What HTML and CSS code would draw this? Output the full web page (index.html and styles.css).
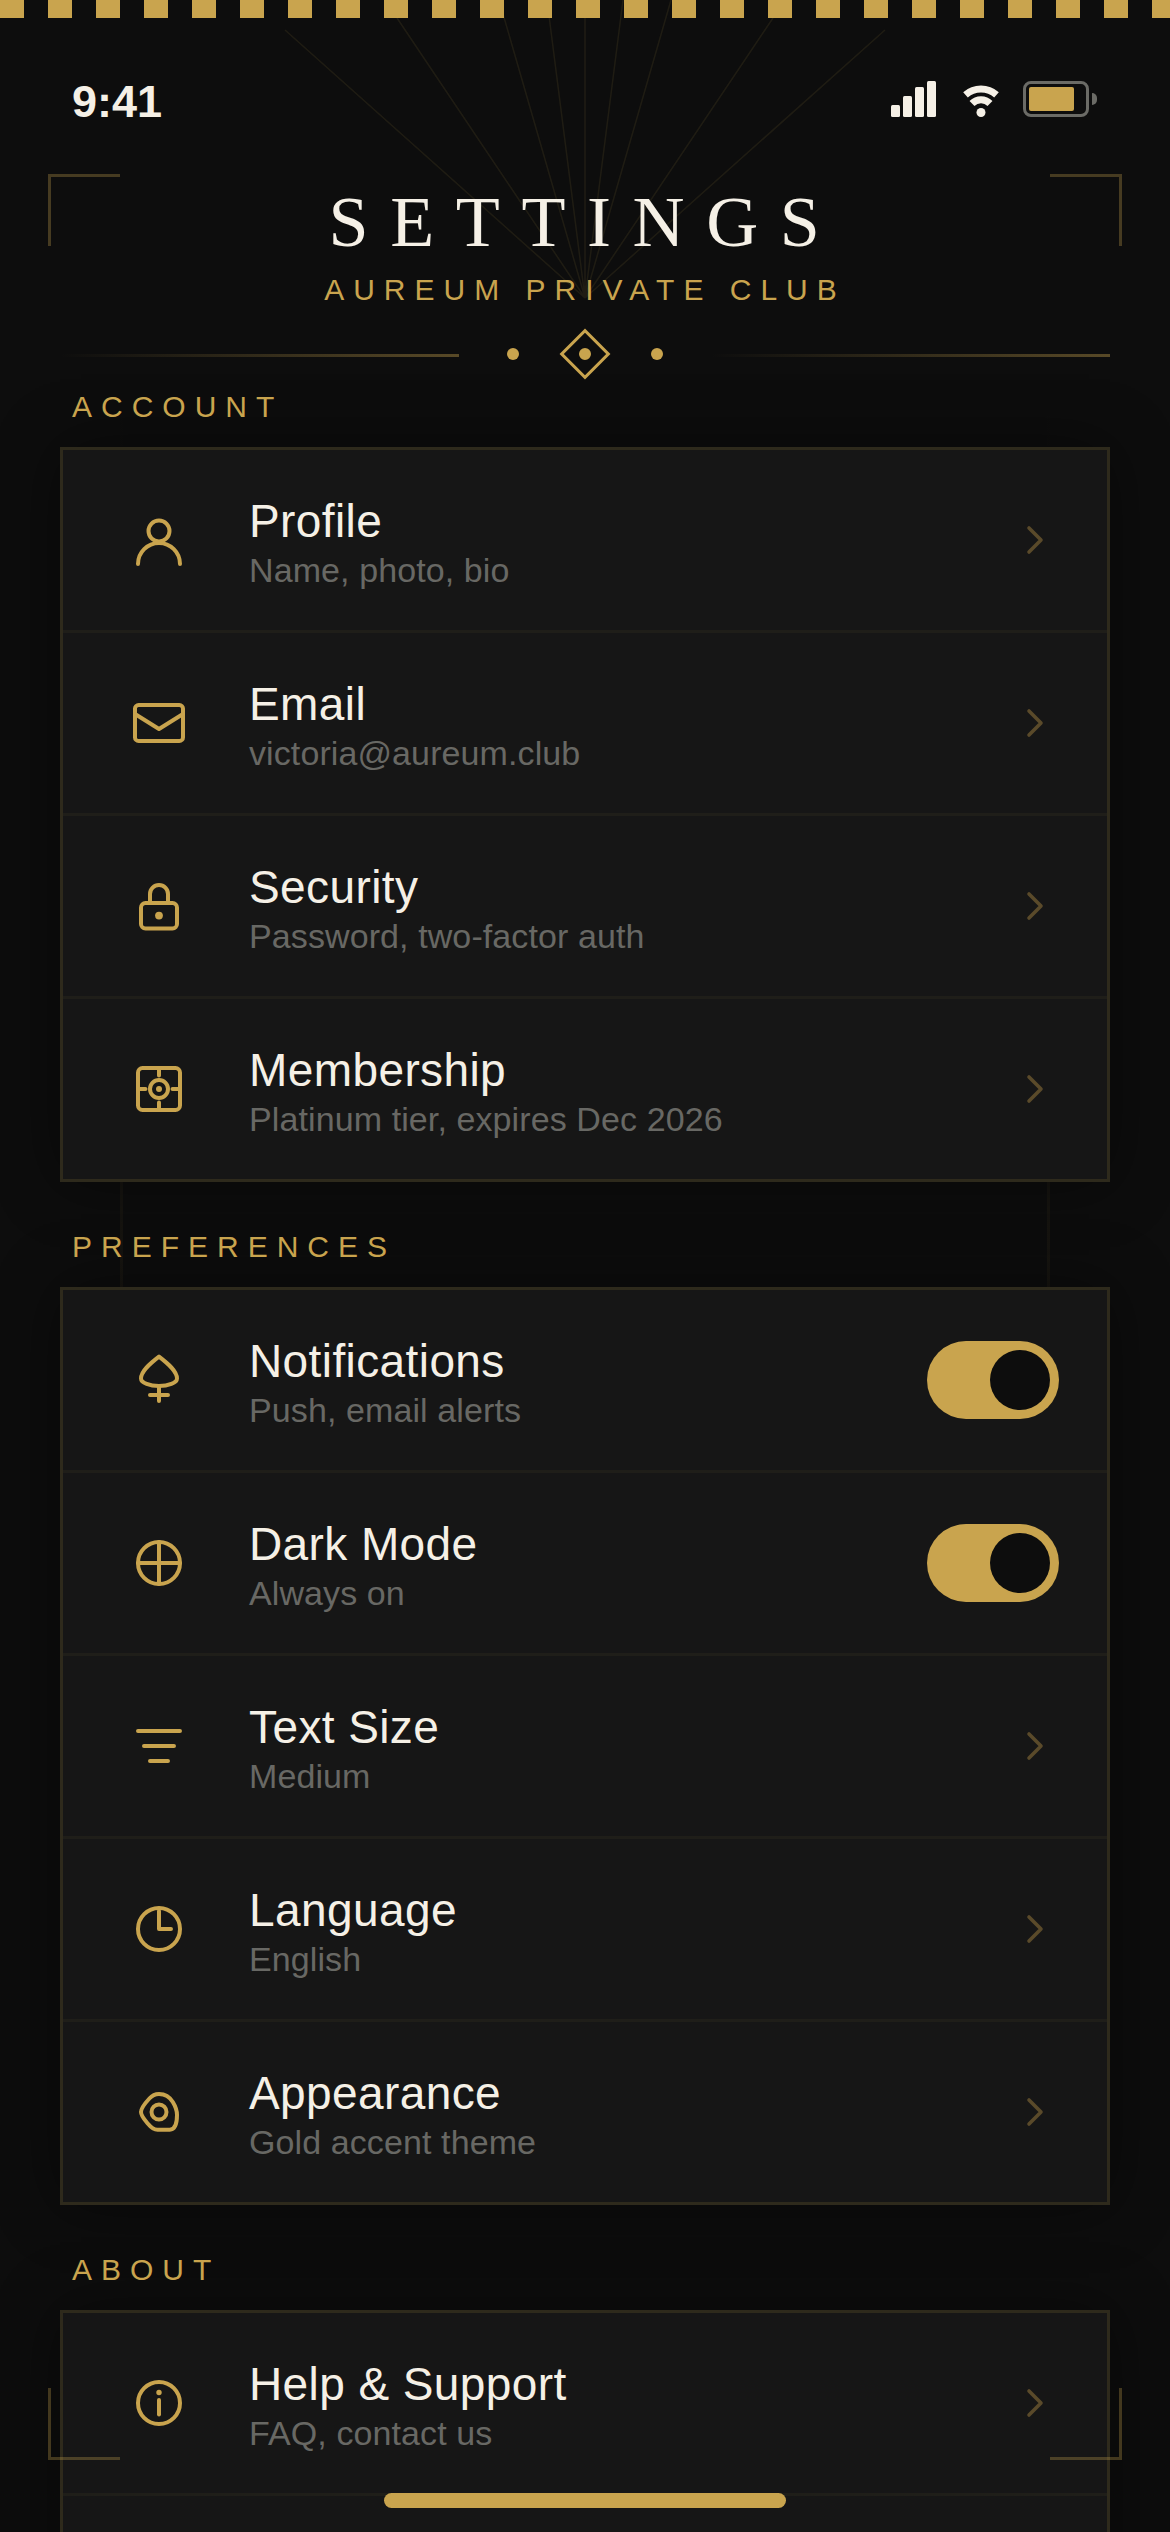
FILE: index.html
```html
<!DOCTYPE html>
<html lang="en">
<head>
  <meta charset="UTF-8">
  <title>Settings</title>
  <link rel="stylesheet" href="styles.css">
</head>
<body>
  <div class="screen">
    <div class="pillar pillar-left"></div>
    <div class="pillar pillar-right"></div>

    <svg class="rays" width="1170" height="300" viewBox="0 0 1170 300">
      <path d="M585 298L285 30M585 298L397 18M585 298L499 0M585 298L547 0M585 298V0M585 298L623 0M585 298L671 0M585 298L773 18M585 298L885 30"/>
    </svg>

    <div class="deco-band"></div>

    <div class="corner corner-tl"></div>
    <div class="corner corner-tr"></div>
    <div class="corner corner-bl"></div>
    <div class="corner corner-br"></div>

    <div class="status-bar">
      <span class="time">9:41</span>
      <div class="status-icons">
        <div class="signal">
          <i class="bar-1"></i>
          <i class="bar-2"></i>
          <i class="bar-3"></i>
          <i class="bar-4"></i>
        </div>
        <svg class="wifi" width="36" height="32" viewBox="0 0 36 32">
          <path d="M2.5 9.8A23.5 23.5 0 0 1 33.5 9.8"/>
          <path d="M9 18.5A12.7 12.7 0 0 1 27 18.5"/>
          <circle cx="18" cy="27.5" r="4.5"/>
        </svg>
        <div class="battery">
          <div class="battery-body"><div class="battery-level"></div></div>
          <div class="battery-nub"></div>
        </div>
      </div>
    </div>

    <header class="header">
      <h1>SETTINGS</h1>
      <p class="club">AUREUM PRIVATE CLUB</p>
      <div class="ornament">
        <div class="orn-line"></div>
        <div class="orn-center">
          <span class="orn-dot"></span>
          <span class="orn-diamond"><span class="orn-dot"></span></span>
          <span class="orn-dot"></span>
        </div>
        <div class="orn-line"></div>
      </div>
    </header>

    <h2 class="section-label section-first">ACCOUNT</h2>
    <section class="card">
      <div class="row">
        <svg class="icon" viewBox="0 0 24 24"><circle cx="12" cy="9" r="3.5"/><path d="M5 20a7 7 0 0 1 14 0"/></svg>
        <div class="row-text"><div class="row-title">Profile</div><div class="row-sub">Name, photo, bio</div></div>
        <svg class="chevron" viewBox="0 0 24 24"><path d="M9 6l6 6-6 6"/></svg>
      </div>
      <div class="row">
        <svg class="icon" viewBox="0 0 24 24"><rect x="4" y="6" width="16" height="12" rx="1.2"/><path d="M4 9l8 5 8-5"/></svg>
        <div class="row-text"><div class="row-title">Email</div><div class="row-sub">victoria@aureum.club</div></div>
        <svg class="chevron" viewBox="0 0 24 24"><path d="M9 6l6 6-6 6"/></svg>
      </div>
      <div class="row">
        <svg class="icon" viewBox="0 0 24 24"><rect x="6" y="11" width="12" height="8.5" rx="1.5"/><path d="M9 11V8a3 3 0 0 1 6 0v3"/><circle class="solid" cx="12" cy="15.2" r="1.3"/></svg>
        <div class="row-text"><div class="row-title">Security</div><div class="row-sub">Password, two-factor auth</div></div>
        <svg class="chevron" viewBox="0 0 24 24"><path d="M9 6l6 6-6 6"/></svg>
      </div>
      <div class="row">
        <svg class="icon" viewBox="0 0 24 24"><rect x="5" y="5" width="14" height="14" rx="1.5"/><circle cx="12" cy="12" r="3"/><circle class="solid" cx="12" cy="12" r="1"/><path d="M12 5v2.5M12 16.5V19M5 12h2.5M16.5 12H19"/></svg>
        <div class="row-text"><div class="row-title">Membership</div><div class="row-sub">Platinum tier, expires Dec 2026</div></div>
        <svg class="chevron" viewBox="0 0 24 24"><path d="M9 6l6 6-6 6"/></svg>
      </div>
    </section>

    <h2 class="section-label">PREFERENCES</h2>
    <section class="card">
      <div class="row">
        <svg class="icon" viewBox="0 0 24 24"><path d="M12 4.2C9 6.5 6 9 6 11.5 6 13 9 14 12 14s6-1 6-2.5C18 9 15 6.5 12 4.2z"/><path d="M12 14v5M9 17h6"/></svg>
        <div class="row-text"><div class="row-title">Notifications</div><div class="row-sub">Push, email alerts</div></div>
        <div class="toggle"><div class="knob"></div></div>
      </div>
      <div class="row">
        <svg class="icon" viewBox="0 0 24 24"><circle cx="12" cy="12" r="7"/><path d="M12 5v14M5 12h14"/></svg>
        <div class="row-text"><div class="row-title">Dark Mode</div><div class="row-sub">Always on</div></div>
        <div class="toggle"><div class="knob"></div></div>
      </div>
      <div class="row">
        <svg class="icon" viewBox="0 0 24 24"><path d="M5 7h14M7 12h10M9 17h6"/></svg>
        <div class="row-text"><div class="row-title">Text Size</div><div class="row-sub">Medium</div></div>
        <svg class="chevron" viewBox="0 0 24 24"><path d="M9 6l6 6-6 6"/></svg>
      </div>
      <div class="row">
        <svg class="icon" viewBox="0 0 24 24"><circle cx="12" cy="12" r="7"/><path d="M12 6v6h4"/></svg>
        <div class="row-text"><div class="row-title">Language</div><div class="row-sub">English</div></div>
        <svg class="chevron" viewBox="0 0 24 24"><path d="M9 6l6 6-6 6"/></svg>
      </div>
      <div class="row">
        <svg class="icon" viewBox="0 0 24 24"><path d="M12 6C14 6 15.600 7 16.600 8.700 17.400 10 18 11.500 18 13 18 15 17.800 17.800 15.600 17.900 14.400 18 13 17.900 11.500 17.900 10 17.900 9.200 17 8.400 16 7.400 14.800 6 13.400 6 12 6 10.600 7.600 8.800 8.800 7.500 9.600 6.600 10.600 6 12 6z"/><circle cx="12" cy="12" r="2.5"/></svg>
        <div class="row-text"><div class="row-title">Appearance</div><div class="row-sub">Gold accent theme</div></div>
        <svg class="chevron" viewBox="0 0 24 24"><path d="M9 6l6 6-6 6"/></svg>
      </div>
    </section>

    <h2 class="section-label">ABOUT</h2>
    <section class="card">
      <div class="row">
        <svg class="icon" viewBox="0 0 24 24"><circle cx="12" cy="12" r="7"/><path d="M12 11v4.8"/><circle class="solid" cx="12" cy="8.5" r=".9"/></svg>
        <div class="row-text"><div class="row-title">Help &amp; Support</div><div class="row-sub">FAQ, contact us</div></div>
        <svg class="chevron" viewBox="0 0 24 24"><path d="M9 6l6 6-6 6"/></svg>
      </div>
      <div class="row"></div>
    </section>

    <div class="home-indicator"></div>
  </div>
</body>
</html>
```

FILE: styles.css
```css
* {
  box-sizing: border-box;
}

html, body {
  margin: 0;
  padding: 0;
}

body {
  font-family: 'Liberation Sans', Arial, sans-serif;
  background: #0d0d0d;
}

.screen {
  position: relative;
  width: 1170px;
  height: 2532px;
  overflow: hidden;
  padding-top: 18px;
  background: #0d0d0d;
}

/* faint background decoration */
.pillar {
  position: absolute;
  top: 0;
  bottom: 0;
  width: 3px;
  background: linear-gradient(180deg, transparent 15%, rgba(201, 164, 78, 0.05) 50%, transparent 85%);
}

.pillar-left { left: 120px; }
.pillar-right { left: 1047px; }

.rays {
  position: absolute;
  top: 0;
  left: 0;
}

.rays path {
  fill: none;
  stroke: #c9a44e;
  stroke-width: 1.5;
  opacity: 0.1;
}

.deco-band {
  position: absolute;
  top: 0;
  left: 0;
  width: 100%;
  height: 18px;
  background: repeating-linear-gradient(90deg, #c9a44e 0, #c9a44e 24px, transparent 24px, transparent 48px);
}

.corner {
  position: absolute;
  z-index: 2;
  width: 72px;
  height: 72px;
  border: 0 solid rgba(201, 164, 78, 0.3);
}

.corner-tl { top: 174px; left: 48px; border-width: 3px 0 0 3px; }
.corner-tr { top: 174px; right: 48px; border-width: 3px 3px 0 0; }
.corner-bl { bottom: 72px; left: 48px; border-width: 0 0 3px 3px; }
.corner-br { bottom: 72px; right: 48px; border-width: 0 3px 3px 0; }

/* status bar */
.status-bar {
  position: relative;
  display: flex;
  justify-content: space-between;
  align-items: center;
  height: 36px;
  margin-top: 63px;
  padding: 0 73px 0 72px;
}

.time {
  margin-top: 6px;
  font-size: 45px;
  font-weight: 700;
  color: #f5f0e6;
}

.status-icons {
  display: flex;
  align-items: flex-end;
}

.signal {
  display: flex;
  align-items: flex-end;
  gap: 3px;
  margin-right: 27px;
}

.signal i {
  display: block;
  width: 9px;
  background: #f5f0e6;
  border-radius: 1.5px;
}

.bar-1 { height: 12px; }
.bar-2 { height: 21px; }
.bar-3 { height: 30px; }
.bar-4 { height: 36px; }

.wifi {
  display: block;
  margin-right: 24px;
}

.wifi path {
  fill: none;
  stroke: #f5f0e6;
  stroke-width: 7;
}

.wifi circle {
  fill: #f5f0e6;
}

.battery {
  display: flex;
  align-items: center;
  gap: 3px;
}

.battery-body {
  width: 66px;
  height: 36px;
  padding: 3px;
  border: 3px solid #6b6b66;
  border-radius: 8px;
}

.battery-level {
  width: 45px;
  height: 24px;
  background: #c9a44e;
  border-radius: 2px;
}

.battery-nub {
  width: 5px;
  height: 12px;
  background: #6b6b66;
  border-radius: 0 5px 5px 0;
}

/* header */
.header {
  position: relative;
  text-align: center;
}

h1 {
  margin: 65px 0 0;
  font-family: 'Liberation Serif', 'Times New Roman', serif;
  font-size: 72px;
  font-weight: 400;
  line-height: 80px;
  letter-spacing: 21.6px;
  color: #f5f0e6;
}

.club {
  margin: 11px 0 0;
  font-size: 30px;
  line-height: 34px;
  letter-spacing: 9px;
  color: #c9a44e;
}

.ornament {
  display: flex;
  align-items: center;
  justify-content: space-between;
  height: 54px;
  margin-top: 20px;
  padding: 0 60px;
}

.orn-line {
  width: 399px;
  height: 3px;
  margin-top: 3px;
  background: linear-gradient(90deg, transparent, rgba(201, 164, 78, 0.4));
}

.orn-center {
  display: flex;
  align-items: center;
  justify-content: center;
  gap: 48px;
}

.orn-dot {
  display: block;
  width: 12px;
  height: 12px;
  background: #c9a44e;
  border-radius: 50%;
}

.orn-diamond {
  display: flex;
  align-items: center;
  justify-content: center;
  width: 36px;
  height: 36px;
  border: 3px solid #c9a44e;
  transform: rotate(45deg);
}

/* sections */
.section-label {
  position: relative;
  z-index: 1;
  margin: 48px 0 23px;
  padding-left: 72px;
  font-size: 30px;
  font-weight: 400;
  line-height: 34px;
  letter-spacing: 9px;
  color: #c9a44e;
}

.section-first {
  margin-top: 9px;
}

.card {
  position: relative;
  margin: 0 60px;
  background: #161616;
  border: 3px solid #2e2a1c;
  box-shadow: 0 0 60px rgba(0, 0, 0, 0.45);
}

.row {
  display: flex;
  align-items: center;
  height: 183px;
  padding: 0 48px 0 60px;
  border-bottom: 3px solid #1f1e19;
}

.row:last-child {
  height: 180px;
  border-bottom: 0;
}

.icon {
  flex: none;
  width: 72px;
  height: 72px;
  margin-right: 54px;
  fill: none;
  stroke: #c9a44e;
  stroke-width: 1.33;
  stroke-linecap: round;
  stroke-linejoin: round;
}

.icon .solid {
  fill: #c9a44e;
  stroke: none;
}

.row-text {
  flex: 1;
  padding-top: 5px;
}

.row-title {
  font-size: 46px;
  line-height: 50px;
  letter-spacing: 0.4px;
  color: #f5f0e6;
}

.row-sub {
  margin-top: 5px;
  font-size: 34px;
  line-height: 38px;
  letter-spacing: 0.1px;
  color: #686864;
}

.chevron {
  flex: none;
  width: 48px;
  height: 48px;
  fill: none;
  stroke: #5a4a2a;
  stroke-width: 1.8;
  stroke-linecap: round;
  stroke-linejoin: round;
}

.toggle {
  flex: none;
  display: flex;
  align-items: center;
  justify-content: flex-end;
  width: 132px;
  height: 78px;
  padding-right: 9px;
  background: #c9a44e;
  border-radius: 39px;
}

.knob {
  width: 60px;
  height: 60px;
  background: #0d0d0d;
  border-radius: 50%;
}

.home-indicator {
  position: absolute;
  z-index: 3;
  left: 384px;
  bottom: 24px;
  width: 402px;
  height: 15px;
  background: #c9a44e;
  border-radius: 8px;
}
```
